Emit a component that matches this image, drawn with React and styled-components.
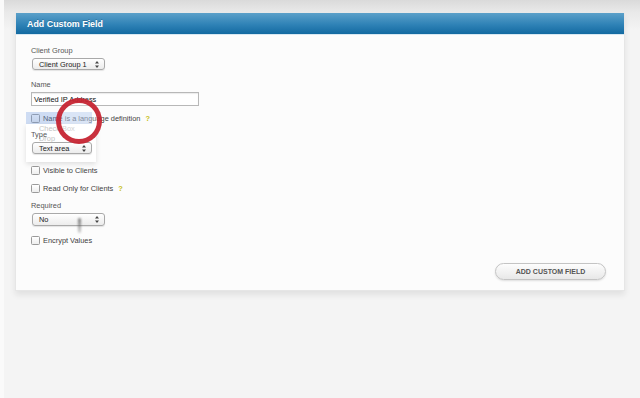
import styled, { createGlobalStyle } from 'styled-components';

const Global = createGlobalStyle`
  html, body {
    margin: 0;
    padding: 0;
    background: #f4f4f4;
    font-family: "Liberation Sans", Arial, sans-serif;
  }
`;

const Page = styled.div`
  width: 640px;
  height: 398px;
  overflow: hidden;
  position: relative;
  background: linear-gradient(to bottom, #dadada 0px, #e9e9e9 12px, #f4f4f4 30px, #f4f4f4 100%);
  padding-top: 13px;
  box-sizing: border-box;
  border-left: 4px solid #fafafa;
`;

const Panel = styled.div`
  margin-left: 11px;
  width: 608px;
  background: #fcfcfc;
  border: 1px solid #e6e6e6;
  border-top: none;
  box-shadow: 0 4px 6px rgba(0, 0, 0, 0.08);
`;

const Header = styled.div`
  height: 21px;
  display: flex;
  align-items: center;
  padding-left: 11px;
  background: linear-gradient(to bottom, #5ba0c9 0%, #2f82b6 55%, #136aa1 100%);
  border-bottom: 1px solid #d8e8f2;
  color: #fff;
  font-weight: bold;
  font-size: 8.9px;
  text-shadow: 0 -1px 0 rgba(0, 0, 0, 0.2);
`;

const Body = styled.div`
  position: relative;
  padding: 11px 18px 10px 15px;
  display: flex;
  flex-direction: column;
`;

const Label = styled.div`
  font-size: 7.4px;
  color: #555;
  height: 10px;
  line-height: 10px;
  margin-bottom: 2px;
`;

const Field = styled.div`
  margin-bottom: ${(p) => p.$mb ?? 10}px;
  position: relative;
  z-index: 2;
`;

const Select = styled.div`
  width: ${(p) => p.$w}px;
  height: ${(p) => p.$h ?? 12}px;
  margin-left: 1px;
  box-sizing: border-box;
  border: 1px solid #a9a9a9;
  border-radius: 3px;
  background: linear-gradient(to bottom, #ffffff, #ececec);
  box-shadow: 0 1px 1px rgba(0, 0, 0, 0.1);
  display: flex;
  align-items: center;
  justify-content: space-between;
  padding: 0 5px 0 6px;
  font-size: 7.4px;
  color: #222;
`;

const Input = styled.div`
  width: 168px;
  height: 14px;
  box-sizing: border-box;
  border: 1px solid #b8b8b8;
  box-shadow: inset 0 1px 1px rgba(0, 0, 0, 0.08);
  background: #fff;
  font-size: 7.4px;
  color: #111;
  display: flex;
  align-items: center;
  padding-left: 2px;
`;

const CheckRow = styled.div`
  display: flex;
  align-items: center;
  height: 10px;
  margin-bottom: ${(p) => p.$mb ?? 8}px;
  font-size: 7.4px;
  color: #3e3e3e;
  position: relative;
`;

const Box = styled.span`
  width: 7px;
  height: 7px;
  border: 1px solid #9a9a9a;
  border-radius: 1.5px;
  background: linear-gradient(to bottom, #fff, #eee);
  margin-right: 3px;
`;

const Help = styled.span`
  color: #c6c020;
  font-weight: bold;
  margin-left: 5px;
`;

const Highlight = styled.span`
  position: absolute;
  left: -5px;
  top: -1px;
  width: 66px;
  height: 12px;
  background: rgba(120, 160, 225, 0.35);
`;

const Popover = styled.div`
  position: absolute;
  z-index: 1;
  left: 10px;
  top: 89px;
  width: 70px;
  height: 38px;
  background: rgba(255, 255, 255, 0.9);
  box-shadow: 0 2px 5px rgba(0, 0, 0, 0.12);
  font-size: 7.4px;
  color: #c4c4c4;
  padding: 0 0 0 13px;
  box-sizing: border-box;
  line-height: 10px;
  pointer-events: none;
`;

const Footer = styled.div`
  display: flex;
  justify-content: flex-end;
  margin-top: 18px;
`;

const Button = styled.div`
  width: 111px;
  height: 17px;
  box-sizing: border-box;
  border: 1px solid #c4c4c4;
  border-radius: 9px;
  background: linear-gradient(to bottom, #fdfdfd, #e8e8e8);
  box-shadow: 0 1px 2px rgba(0, 0, 0, 0.12);
  display: flex;
  align-items: center;
  justify-content: center;
  font-size: 7px;
  font-weight: bold;
  color: #555;
`;

const Ring = styled.div`
  position: absolute;
  z-index: 5;
  left: 52px;
  top: 98px;
  width: 36px;
  height: 36px;
  border: 5px solid rgba(196, 30, 45, 0.92);
  border-radius: 50%;
  background: rgba(255, 255, 255, 0.25);
  pointer-events: none;
`;

const Cursor = styled.div`
  position: absolute;
  z-index: 5;
  left: 74px;
  top: 218px;
  width: 3px;
  height: 15px;
  border-radius: 2px;
  background: linear-gradient(to bottom, rgba(80, 80, 80, 0.75), rgba(120, 120, 120, 0.3));
  filter: blur(0.8px);
`;

const Arrows = () => (
  <svg width="4" height="7" viewBox="0 0 4 7">
    <path d="M2 0 L4 2.6 L0 2.6 Z M0 4.4 L4 4.4 L2 7 Z" fill="#444" />
  </svg>
);

const Sel = ({ w, h, children }) => (
  <Select $w={w} $h={h}>
    <span>{children}</span>
    <Arrows />
  </Select>
);

export default function App() {
  return (
    <>
      <Global />
      <Page>
        <Panel>
          <Header>Add Custom Field</Header>
          <Body>
            <Field>
              <Label>Client Group</Label>
              <Sel w={73}>Client Group 1</Sel>
            </Field>
            <Field $mb={7}>
              <Label>Name</Label>
              <Input>Verified IP Address</Input>
            </Field>
            <CheckRow $mb={7}>
              <Highlight />
              <Box />
              Name is a language definition
              <Help>?</Help>
            </CheckRow>
            <Field $mb={11}>
              <Label>Type</Label>
              <Sel w={60}>Text area</Sel>
            </Field>
            <CheckRow>
              <Box />
              Visible to Clients
            </CheckRow>
            <CheckRow $mb={8}>
              <Box />
              Read Only for Clients
              <Help>?</Help>
            </CheckRow>
            <Field $mb={9}>
              <Label>Required</Label>
              <Sel w={73} h={13}>No</Sel>
            </Field>
            <CheckRow $mb={0}>
              <Box />
              Encrypt Values
            </CheckRow>
            <Footer>
              <Button>ADD CUSTOM FIELD</Button>
            </Footer>
            <Popover>
              <div>Check Box</div>
              <div>Drop</div>
            </Popover>
          </Body>
        </Panel>
        <Ring />
        <Cursor />
      </Page>
    </>
  );
}
